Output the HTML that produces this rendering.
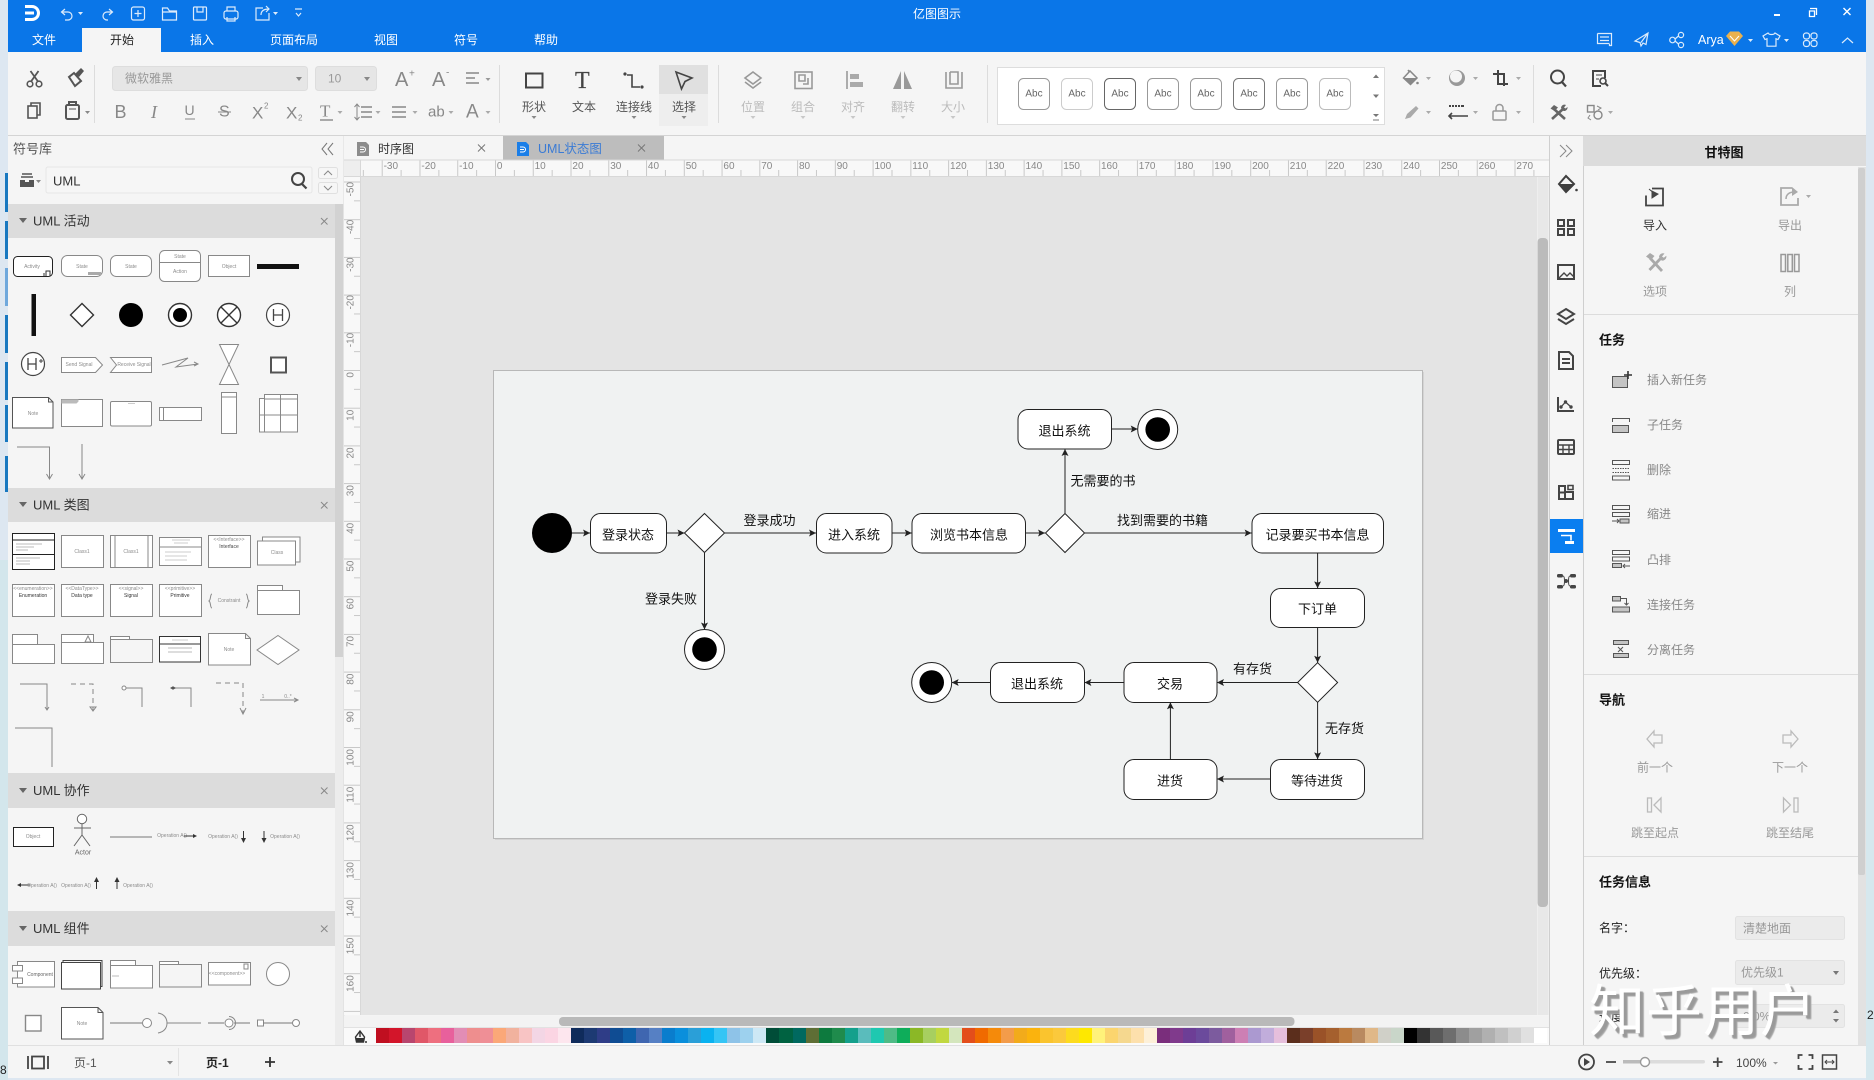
<!DOCTYPE html>
<html lang="zh"><head><meta charset="utf-8"><title>亿图图示</title>
<style>
html,body{margin:0;padding:0;width:1874px;height:1080px;overflow:hidden;background:#dfe8f0}
svg{position:absolute;left:0;top:0}
svg text{font-family:"Liberation Sans","Noto Sans CJK SC",sans-serif;dominant-baseline:central;font-size:12px}
.m{text-anchor:middle}
.tb{fill:#fff}
.ic{fill:none;stroke:#555;stroke-width:1.6}
.dis{fill:none;stroke:#aaa;stroke-width:1.6}
.wh{fill:none;stroke:#dcebfb;stroke-width:1.2}
.d{fill:#888}
.dr{fill:#999}
.rl text{font-size:10px;fill:#888}
.l{fill:#fff;stroke:#888;stroke-width:1}
.k{fill:#fff;stroke:#222;stroke-width:1}
.n{fill:none;stroke:#888;stroke-width:1}
.t text,text.t{font-size:5px;fill:#8c8c8c;text-anchor:middle}
.sh text{font-size:13px;fill:#333}
.sv text{font-size:13px;fill:#111;text-anchor:middle}
.bx{fill:#fff;stroke:#222;stroke-width:1}
.ln{stroke:#222;stroke-width:1;fill:none;marker-end:url(#ar)}
.ab{fill:#fff;stroke:#999;stroke-width:1}
.ab2 text{font-size:10px;fill:#666;text-anchor:middle}
.li text{font-size:12px;fill:#888}
.b{font-weight:bold;font-size:13px;fill:#111}
#pal{position:absolute;left:376px;top:1028px;height:15px;display:flex}
#pal i{display:block;width:13.03px;height:15px;flex:none}
#wm{position:absolute;left:1589px;top:973px;font:56px/70px "Noto Sans CJK SC","WenQuanYi Zen Hei",sans-serif;letter-spacing:1px;color:#fff;text-shadow:3px 3px 1px #9a9a9a,4px 4px 1px #a8a8a8;white-space:nowrap}
</style></head><body>
<svg width="1874" height="1080" viewBox="0 0 1874 1080" xmlns="http://www.w3.org/2000/svg">
<defs>
<marker id="ar" markerWidth="7" markerHeight="7" refX="7" refY="3.5" orient="auto" markerUnits="userSpaceOnUse"><path d="M0 0L7 3.500L0 7L1.500 3.500z" fill="#222"/></marker>
<pattern id="hr" x="495" y="160" width="37.76" height="17" patternUnits="userSpaceOnUse"><path d="M.5 0V17M19.400 10V17" stroke="#c8c8c8" fill="none"/></pattern>
<pattern id="vr" x="344" y="370" width="17" height="37.7" patternUnits="userSpaceOnUse"><path d="M0 .5H17M10 19.300H17" stroke="#c8c8c8" fill="none"/></pattern>
</defs>
<!-- desktop -->
<rect width="1874" height="1080" fill="#dde7f1"/>
<rect x="0" y="560" width="8" height="520" fill="#d3e6ec"/>
<rect x="1866" y="560" width="8" height="520" fill="#d6e8ee"/>
<g fill="#1878c0"><rect x="5" y="173" width="3" height="39"/><rect x="5" y="221" width="3" height="38"/><rect x="5" y="268" width="3" height="38" fill="#6fa8dc"/><rect x="5" y="315" width="3" height="38"/><rect x="5" y="362" width="3" height="38"/><rect x="5" y="405" width="3" height="37"/><rect x="5" y="456" width="3" height="36"/></g>
<text x="0" y="1070" fill="#222" style="font-size:12px">8</text>
<text x="1867" y="1015" fill="#222" style="font-size:12px">2</text>
<!-- window -->
<rect x="8" y="0" width="1858" height="1078" fill="#f5f5f5"/>
<rect x="8" y="0" width="1858" height="52" fill="#0a76e8"/>
<rect x="82" y="28" width="79" height="24" fill="#f5f5f5"/>
<rect x="8" y="135" width="1858" height="1" fill="#d4d4d4"/>
<!-- QAT -->
<g fill="none" stroke="#fff" stroke-width="3"><path d="M25 6.500h7a6.500 6.500 0 0 1 0 13h-7M25 13h9"/></g>
<g class="wh">
<path d="M65 9l-3.500 3 3.500 3M62 12h6a4 4 0 0 1 0 8h-3"/>
<path d="M109 9l3.500 3-3.500 3M112 12h-5a4 4 0 0 0 0 8h1"/>
<rect x="131.500" y="7" width="13" height="13" rx="2"/><path d="M138 10v7M134.500 13.500h7"/>
<path d="M162.500 10V20h14V11h-7l-2-3h-5zM162.500 12h14"/>
<rect x="193.500" y="7" width="13" height="13" rx="1"/><path d="M197 7v5h6V7"/>
<rect x="224" y="11" width="14" height="8" rx="2"/><path d="M227 11V7h8v4M227 17v4h8v-4"/>
<path d="M263 8h-7v12h13v-7M261 15c0-4 3-6 8-6M266 6l3 3-3 3"/>
<path d="M295 9h7M296 13l2.500 3 2.500-3"/>
</g>
<g fill="#dcebfb"><path d="M78 12h5l-2.500 3zM273 12h5l-2.500 3z"/></g>
<text x="937" y="14" class="m tb">亿图图示</text>
<!-- window buttons -->
<path d="M1774 15h6" stroke="#fff" stroke-width="2"/>
<path d="M1810 8.500h6.500v6.500M1809.500 11h5v5.500h-5z" fill="none" stroke="#fff" stroke-width="1.300"/>
<path d="M1843.500 8l7 7M1850.500 8l-7 7" stroke="#fff" stroke-width="1.400"/>
<g class="wh">
<path d="M1597.500 33.500h14v12h-2v-1.500M1597.500 33.500v10h12M1600 37h9M1600 40.500h9"/>
<path d="M1648 33l-13 8 5 1.500 1 3.500 2-3 3 1.500z M1648 33l-7 9.500"/>
<circle cx="1672.500" cy="40" r="2.800"/><circle cx="1681" cy="35" r="2.600"/><circle cx="1681" cy="45" r="2.600"/><path d="M1675 39l3.500-3M1675 41l3.500 3"/>
<path d="M1768 33l-5 3 2 3.500 2-.8v7.500h9v-7.500l2 .8 2-3.500-5-3c-1 2-6 2-7 0z"/>
<rect x="1803.500" y="33" width="6" height="6" rx="2.500"/><rect x="1811" y="33" width="6" height="6" rx="2.500"/><rect x="1803.500" y="40.500" width="6" height="6" rx="2.500"/><rect x="1811" y="40.500" width="6" height="6" rx="2.500"/>
<path d="M1842 43l5.500-5 5.500 5"/>
</g>
<text x="1698" y="40" fill="#fff" style="font-size:12.500px">Arya</text>
<path d="M1726 36l4-4.500h9l4 4.500-8.500 10z" fill="#eab14d"/><path d="M1730 36l4.500 5 4.500-5" fill="none" stroke="#fff" stroke-width="1"/>
<path d="M1748 39h5l-2.500 3zM1784 39h5l-2.500 3z" fill="#dcebfb"/>
<!-- menu -->
<g class="tb"><text x="44" y="40" class="m">文件</text><text x="202" y="40" class="m">插入</text><text x="294" y="40" class="m">页面布局</text><text x="386" y="40" class="m">视图</text><text x="466" y="40" class="m">符号</text><text x="546" y="40" class="m">帮助</text></g>
<text x="122" y="40" class="m" fill="#222">开始</text>
<!-- ribbon row 1 left -->
<g class="ic">
<circle cx="30" cy="84" r="2.800"/><circle cx="39" cy="84" r="2.800"/><path d="M31 81.500L38.500 71M38 81.500L30.500 71" stroke-width="1.800"/>
<path d="M69 77l6 9 6-5-7-8z" stroke-width="2"/>
<rect x="28" y="106" width="9" height="12"/><path d="M31 106v-3h9v12h-3"/>
<rect x="66" y="105" width="13" height="14" rx="1.500" stroke-width="2"/><path d="M69 105v-3h7v3" stroke-width="2"/><path d="M69 109h7" stroke-width="1"/>
</g>
<path d="M75 74l6-6 3 3-5 6z" fill="#555"/>
<path d="M85 111h5l-2.500 3z" class="d"/>
<path d="M94.500 65v58M499.500 65v58M718.500 65v58M987.500 65v58M1533.500 65v58" stroke="#dcdcdc"/>
<rect x="112.500" y="66.500" width="195" height="24" rx="3" fill="#e6e6e6" stroke="#ddd"/>
<text x="125" y="78.500" fill="#999">微软雅黑</text>
<path d="M296 77h6l-3 4z" class="d"/>
<rect x="315.500" y="66.500" width="61" height="24" rx="3" fill="#e6e6e6" stroke="#ddd"/>
<text x="328" y="78.500" fill="#999">10</text>
<path d="M364 77h6l-3 4z" class="d"/>
<text x="395" y="80" style="font-size:20px" fill="#888">A</text><text x="409" y="74" style="font-size:10px" fill="#888">+</text><text x="432" y="80" style="font-size:20px" fill="#888">A</text><text x="446" y="73" style="font-size:10px" fill="#888">-</text>
<path d="M466 73h13M466 78h9M466 83h13" stroke="#888" stroke-width="1.600"/>
<path d="M485.500 78h5l-2.500 3z" class="dr"/>
<!-- ribbon row 2 -->
<g fill="#888">
<text x="114.500" y="112" style="font-size:18px">B</text>
<text x="151" y="112" style="font-size:18px;font-family:'Liberation Serif',serif;font-style:italic">I</text>
<text x="184.500" y="110" style="font-size:14px">U</text><path d="M185 119h10" stroke="#888" stroke-width="1"/>
<text x="219" y="112" style="font-size:16px">S</text><path d="M218 112h13" stroke="#888" stroke-width="1"/>
<text x="252" y="113" style="font-size:17px">X</text><text x="264" y="106" style="font-size:8px">2</text>
<text x="286" y="113" style="font-size:17px">X</text><text x="298" y="118" style="font-size:8px">2</text>
<text x="320" y="111" style="font-size:17px;font-family:'Liberation Serif',serif">T</text><path d="M320 120h13" stroke="#888" stroke-width="1.400"/>
<path d="M337.500 111h5l-2.500 3zM375.500 111h5l-2.500 3zM412.500 111h5l-2.500 3zM448.500 111h5l-2.500 3zM485.500 111h5l-2.500 3z" fill="#aaa"/>
<text x="428" y="112" style="font-size:15px">ab</text>
<text x="466" y="112" style="font-size:19px">A</text>
</g>
<path d="M361 107h11M361 112h11M361 117h11M392 107h14M392 112h14M392 117h14" stroke="#888" stroke-width="1.600"/>
<path d="M357 105v14M354.500 107l2.500-3 2.500 3M354.500 117l2.500 3 2.500-3" stroke="#888" fill="none"/>
<!-- shapes -->
<rect x="526" y="73.500" width="16.500" height="14" fill="none" style="stroke:#444;stroke-width:2"/>
<text x="575" y="81" style="font-size:24px;font-family:'Liberation Serif',serif" fill="#444" stroke="#444" stroke-width=".2">T</text>
<path d="M627 75h5v12h8" fill="none" stroke="#444" stroke-width="1.600"/><circle cx="625" cy="74" r="1.600" fill="#444"/><circle cx="642" cy="87" r="1.600" fill="#444"/>
<rect x="659" y="65" width="49" height="29" fill="#e0e0e0"/><rect x="659" y="94" width="49" height="32" fill="#eeeeee"/>
<path d="M676 72l16 6-7 3.500-3.500 7.500z" class="ic" style="stroke:#444"/>
<g fill="#555"><text x="534" y="107" class="m">形状</text><text x="584" y="107" class="m">文本</text><text x="634" y="107" class="m">连接线</text><text x="684" y="107" class="m">选择</text></g>
<path d="M531.500 116h5l-2.500 3zM631.500 116h5l-2.500 3zM681.500 116h5l-2.500 3z" fill="#888"/>
<!-- disabled group -->
<g class="dis" style="stroke:#999">
<path d="M753 72l8 6-8 6-8-6zM745 82l8 6 8-6"/>
<rect x="795" y="72" width="17" height="16.500"/><path d="M799 75h6v6h-6zM803 84h5v-6"/>
<path d="M847 71v18"/><path d="M946 72v16h16V72M950 72v12h8V72h-8"/>
</g>
<path d="M850 74h9v5h-9zM850 82h13v5h-13z" fill="#aaa"/>
<path d="M893 89l8-18v18zM904 71l8 18h-8z" fill="#999"/>
<g fill="#bbb"><text x="753" y="107" class="m">位置</text><text x="803" y="107" class="m">组合</text><text x="853" y="107" class="m">对齐</text><text x="903" y="107" class="m">翻转</text><text x="953" y="107" class="m">大小</text></g>
<path d="M750.500 116h5l-2.500 3zM800.500 116h5l-2.500 3zM850.500 116h5l-2.500 3zM900.500 116h5l-2.500 3zM950.500 116h5l-2.500 3z" fill="#c8c8c8"/>
<!-- style panel -->
<rect x="997.500" y="67.500" width="387" height="57" fill="#fff" stroke="#ddd"/>
<g class="ab"><rect x="1018.500" y="78.500" width="31" height="31" rx="5"/><rect x="1061.500" y="78.500" width="31" height="31" rx="5" stroke="#ccc"/><rect x="1104.500" y="78.500" width="31" height="31" rx="5" stroke="#666"/><rect x="1147.500" y="78.500" width="31" height="31" rx="5"/><rect x="1190.500" y="78.500" width="31" height="31" rx="5"/><rect x="1233.500" y="78.500" width="31" height="31" rx="5" stroke="#777"/><rect x="1276.500" y="78.500" width="31" height="31" rx="5"/><rect x="1319.500" y="78.500" width="31" height="31" rx="5" stroke="#bbb"/></g>
<g class="ab2"><text x="1034" y="94">Abc</text><text x="1077" y="94">Abc</text><text x="1120" y="94">Abc</text><text x="1163" y="94">Abc</text><text x="1206" y="94">Abc</text><text x="1249" y="94">Abc</text><text x="1292" y="94">Abc</text><text x="1335" y="94">Abc</text></g>
<path d="M1373 78h6l-3-3.500zM1373 94.500h6l-3 3.500zM1373 114h6l-3 3z" fill="#777" stroke="none"/><path d="M1373 120h6" stroke="#777"/>
<!-- right tools -->
<path d="M1408 70l1.500 2M1403.500 78l6.500-7 7 7-6.500 6.500z" fill="none" stroke="#888" stroke-width="1.500"/><path d="M1403.500 78h13.500l-6.500 6.500z" fill="#888"/><circle cx="1417.500" cy="83" r="1.300" fill="#888"/>
<circle cx="1457" cy="78" r="8" fill="#999"/><circle cx="1456" cy="76.500" r="6" fill="#f5f5f5"/>
<path d="M1498 70v14h10M1493 74h11v12" fill="none" stroke="#444" stroke-width="2"/>
<path d="M1405 119l2-5 9-8 2.500 2.500-8 9z" fill="#aaa"/>
<path d="M1449 106h2M1452 106h2M1455 106h2M1458 106h2M1461 106h3" stroke="#444" stroke-width="2"/>
<path d="M1449 116h19M1452 113l-3 3 3 3" stroke="#444" stroke-width="1.600" fill="none"/>
<rect x="1493" y="111" width="13" height="9" rx="1" fill="none" stroke="#999" stroke-width="1.500"/><path d="M1496 111v-3a3.500 3.500 0 0 1 7 0v3" fill="none" stroke="#999" stroke-width="1.500"/>
<path d="M1426 77h5l-2.500 3zM1473 77h5l-2.500 3zM1516 77h5l-2.500 3zM1426 111h5l-2.500 3zM1473 111h5l-2.500 3zM1516 111h5l-2.500 3zM1608 111h5l-2.500 3z" fill="#aaa"/>
<circle cx="1557.500" cy="77" r="6.500" fill="none" stroke="#444" stroke-width="2"/><path d="M1562 82l4 4.500" stroke="#444" stroke-width="2.200"/>
<path d="M1605 78V71h-12v15h8" fill="none" stroke="#444" stroke-width="2"/><path d="M1596 75h6M1596 79h3" stroke="#444"/><circle cx="1603" cy="81" r="3" fill="none" stroke="#444" stroke-width="1.600"/><path d="M1605 83l3 3" stroke="#444" stroke-width="2"/>
<!-- tools: wrench + hammer -->
<path d="M1554 109l11 10M1563 109l-11 10" stroke="#666" stroke-width="2.600"/><path d="M1550.500 108.500l3.500-3.500 4 2.500-3.500 3.500z" fill="#666"/><path d="M1561 108a3.500 3.500 0 0 1 5-3l-2 2.500 1.500 1 2-1.500a3.500 3.500 0 0 1-4 4z" fill="#666"/>
<rect x="1587.500" y="105.500" width="6.500" height="6.500" fill="none" stroke="#888" stroke-width="1.400"/><circle cx="1598" cy="115" r="4" fill="none" stroke="#888" stroke-width="1.400"/><path d="M1597 106l4 2-3 2M1590 115l-2 3 3 2" fill="none" stroke="#888"/>
<!-- LEFT PANEL -->
<text x="13" y="149" fill="#555" style="font-size:13px">符号库</text>
<path d="M327 143l-5 6 5 6M333 143l-5 6 5 6" fill="none" stroke="#777"/>
<path d="M22 174h10M21 177h12" stroke="#555" stroke-width="1.500"/><path d="M20 180h5v2h4v-2h5v7H20z" fill="#555"/>
<path d="M36 180h5l-2.500 3z" fill="#888"/>
<rect x="46" y="167" width="266" height="26" rx="2" fill="#f6f6f6" stroke="#e6e6e6"/>
<text x="53" y="181" fill="#333" style="font-size:13px">UML</text>
<circle cx="298" cy="179" r="6" fill="none" stroke="#444" stroke-width="2"/><path d="M302 184l4.500 4.500" stroke="#444" stroke-width="2.200"/>
<rect x="318.500" y="167.500" width="19" height="11" rx="2" fill="#f6f6f6" stroke="#e0e0e0"/><rect x="318.500" y="182.500" width="19" height="11" rx="2" fill="#f6f6f6" stroke="#e0e0e0"/>
<path d="M324 175l4-4 4 4M324 186l4 4 4-4" fill="none" stroke="#888"/>
<rect x="335" y="204" width="9" height="841" fill="#ececec"/><rect x="335" y="204" width="8" height="453" fill="#d2d2d2"/>
<rect x="343.500" y="136" width="1" height="909" fill="#dadada"/>
<g class="sh">
<rect x="8" y="204" width="327" height="34" fill="#dcdcdc"/><rect x="8" y="488" width="327" height="34" fill="#dcdcdc"/><rect x="8" y="773" width="327" height="35" fill="#dcdcdc"/><rect x="8" y="911" width="327" height="35" fill="#dcdcdc"/>
<text x="33" y="221">UML 活动</text><text x="33" y="505">UML 类图</text><text x="33" y="790.500">UML 协作</text><text x="33" y="928.500">UML 组件</text>
</g>
<path d="M19 218h8l-4 5zM19 502h8l-4 5zM19 788h8l-4 5zM19 926h8l-4 5z" fill="#666"/>
<path d="M321 218l6.500 6.500M327.500 218l-6.500 6.500M321 502l6.500 6.500M327.500 502l-6.500 6.500M321 787.500l6.500 6.500M327.500 787.500l-6.500 6.500M321 925.500l6.500 6.500M327.500 925.500l-6.500 6.500" stroke="#888"/>
<!-- UML activity -->
<g class="t">
<rect x="13.500" y="256.500" width="39" height="20" rx="4" class="k"/><text x="32" y="267">Activity</text><path d="M46 276v-5h4v5M44 273v3" class="n" style="stroke:#333"/>
<rect x="61.500" y="255.500" width="41" height="21" rx="6" class="l"/><text x="82" y="267">State</text><rect x="88" y="272" width="13" height="3" fill="#aaa"/>
<rect x="110.500" y="255.500" width="41" height="21" rx="6" class="l"/><text x="131" y="267">State</text>
<rect x="159.500" y="250.500" width="41" height="31" rx="5" class="l"/><path d="M159.500 262.500h41" class="n"/><text x="180" y="257">State</text><text x="180" y="272">Action</text>
<rect x="208.500" y="255.500" width="41" height="21" class="l"/><text x="229" y="267">Object</text>
<rect x="257" y="264" width="42" height="5" fill="#111"/>
<rect x="31.500" y="294" width="4.500" height="42" fill="#111"/>
<path d="M82 303.500l11.500 11.500-11.500 11.500-11.500-11.500z" class="k" style="stroke:#333;stroke-width:1.400"/>
<circle cx="131" cy="315" r="12" fill="#000"/>
<circle cx="180" cy="315" r="11.500" fill="#fff" stroke="#333" stroke-width="1.400"/><circle cx="180" cy="315" r="7" fill="#000"/>
<circle cx="229" cy="315" r="11.500" fill="#fff" stroke="#333" stroke-width="1.400"/><path d="M221 307l16 16M237 307l-16 16" stroke="#333" stroke-width="1.400"/>
<circle cx="278" cy="315" r="11.500" fill="#fff" stroke="#444" stroke-width="1.200"/><path d="M273.500 309v12M282.500 309v12M273.500 315h9" stroke="#444" stroke-width="1.300"/>
<circle cx="33" cy="364" r="11.500" fill="#fff" stroke="#444" stroke-width="1.200"/><path d="M28 358v12M36 358v12M28 364h8" stroke="#444" stroke-width="1.300"/><path d="M39 361h4M41 359v4" stroke="#444"/>
<path d="M61.500 357.500h34l7 7.500-7 7.500h-34z" class="l"/><text x="79" y="365">Send Signal</text>
<path d="M110.500 357.500h41v15h-41l6-7.500z" class="l"/><text x="134" y="365">Receive Signal</text>
<path d="M162 365l26-7-12 9 22-3m-4-2l4 2-4 2" class="n"/>
<path d="M219.500 344.500h19l-19 40h19z" class="l"/>
<rect x="271" y="357.500" width="15" height="15" fill="#fff" stroke="#555" stroke-width="2"/>
<path d="M12.500 397.500h36l4.500 4.500v26H12.500zM48.500 397.500v4.500h4.500" class="l" style="stroke:#555"/><text x="33" y="414">Note</text>
<rect x="61.500" y="399.500" width="41" height="27" class="l"/><path d="M61.500 399.500h17v2l-2 2h-15z" fill="#bbb"/>
<rect x="110.500" y="401.500" width="41" height="24.500" rx="1.500" class="l"/><path d="M128 403.500h7" stroke="#ccc"/>
<rect x="159.500" y="407.500" width="42" height="13" class="l"/><path d="M163.500 407.500v13" class="n"/>
<rect x="221.500" y="392.500" width="15" height="41" class="l"/><path d="M221.500 397h15" class="n"/>
<rect x="264.500" y="394.500" width="33" height="37.500" class="l"/><rect x="259.500" y="398.500" width="5" height="33.500" class="l"/><path d="M264.500 399h33M280.500 394.500v37.500M259.500 415h38" class="n"/>
<path d="M17 447h32.500v32M46.500 474l3 5 3-5" class="n"/>
<path d="M82 444v35M79 474l3 5 3-5" class="n"/>
</g>
<!-- UML class -->
<g class="t">
<rect x="12.500" y="533.500" width="42" height="36" class="k"/><path d="M12.500 540h42M12.500 554.500h42" stroke="#222"/><path d="M16 544h26M16 547h18M16 550h12M16 558h24M16 561h14M16 564h14" stroke="#bbb"/>
<rect x="61.500" y="535.500" width="42" height="32" class="l"/><text x="82" y="552">Class1</text>
<rect x="110.500" y="535.500" width="42" height="32" class="l"/><path d="M115 535.500v32M148 535.500v32" class="n"/><text x="131" y="552">Class1</text>
<rect x="159.500" y="537.500" width="42" height="28" class="l"/><path d="M159.500 547h42" class="n"/><path d="M172 540h18M174 543h14M165 552h26M165 556h22M165 560h22" stroke="#ccc"/>
<rect x="208.500" y="535.500" width="42" height="32" class="l"/><text x="229" y="540">&lt;&lt;Interface&gt;&gt;</text><text x="229" y="547" style="fill:#444">Interface</text>
<rect x="262.500" y="537" width="37.500" height="25" class="l"/><rect x="257.500" y="541" width="38" height="24" class="l"/><text x="277" y="553">Class</text>
<rect x="12.500" y="584.500" width="42" height="32" class="l"/><text x="33" y="589">&lt;&lt;enumeration&gt;&gt;</text><text x="33" y="596" style="fill:#333">Enumeration</text>
<rect x="61.500" y="584.500" width="42" height="32" class="l"/><text x="82" y="589">&lt;&lt;DataType&gt;&gt;</text><text x="82" y="596" style="fill:#333">Data type</text>
<rect x="110.500" y="584.500" width="42" height="32" class="l"/><text x="131" y="589">&lt;&lt;signal&gt;&gt;</text><text x="131" y="596" style="fill:#333">Signal</text>
<rect x="159.500" y="584.500" width="42" height="32" class="l"/><text x="180" y="589">&lt;&lt;primitive&gt;&gt;</text><text x="180" y="596" style="fill:#333">Primitive</text>
<text x="229" y="601">Constraint</text><path d="M212 594c-2 0-1 6-3 7 2 1 1 7 3 7M246 594c2 0 1 6 3 7-2 1-1 7-3 7" class="n"/>
<rect x="257.500" y="590.500" width="42" height="24" class="l"/><rect x="257.500" y="585.500" width="25" height="5" class="l"/>
<rect x="12.500" y="644.500" width="42" height="19" class="l"/><rect x="12.500" y="634.500" width="25" height="10" class="l"/>
<rect x="61.500" y="642.500" width="42" height="21" class="l"/><rect x="61.500" y="634.500" width="32" height="8" class="l"/><path d="M85 642l3-6 3 6z" class="n"/>
<rect x="110.500" y="639.500" width="42" height="23" fill="none" stroke="#888"/><rect x="110.500" y="636.500" width="19" height="3" class="l"/>
<rect x="159.500" y="636.500" width="41" height="25.500" class="k" style="stroke:#333"/><path d="M159.500 644h41" stroke="#333"/><path d="M168 648h24M168 652h24" stroke="#bbb"/><path d="M172 640h16" stroke="#ccc"/>
<path d="M208.500 633.500h37l5 5v26.500h-42zM245.500 633.500v5h5" class="l"/><text x="229" y="650">Note</text>
<path d="M278 635.500l21 14.500-21 14.500-21-14.500z" class="l"/>
<path d="M20 684h27v26M45 707l2 3 2-3" class="n"/>
<path d="M71 684h22v26" class="n" stroke-dasharray="5 4"/><path d="M90 707l3 4 3-4z" class="n"/>
<path d="M126 688h16v19" class="n"/><circle cx="124" cy="688" r="2" class="l"/>
<path d="M175 688h16v19" class="n"/><path d="M170 688l3-1.800 3 1.800-3 1.800z" fill="#555"/>
<path d="M216 683h27v30" class="n" stroke-dasharray="5 4"/><path d="M240 708l3 6 3-6" class="n"/>
<path d="M260 700h38M294 698l4 2-4 2" class="n"/><text x="263" y="697">1</text><text x="288" y="697">0..*</text>
<path d="M15 728h37v39" class="n"/>
</g>
<!-- UML collab -->
<g class="t">
<rect x="13.500" y="827.500" width="40" height="19" class="k"/><text x="33" y="837">Object</text>
<circle cx="82" cy="819" r="4.700" class="l" style="stroke:#666"/><path d="M82 824v11M74 828h17M82 835l-8 11M82 835l8 11" class="n" style="stroke:#666"/>
<text x="83" y="853" style="font-size:7px;fill:#666">Actor</text>
<path d="M110 837h42" stroke="#777"/>
<text x="172" y="836">Operation A()</text><path d="M184 836h12" stroke="#333"/><path d="M193 834l4 2-4 2z" fill="#333"/>
<text x="223" y="837">Operation A()</text><path d="M243.500 831v11" stroke="#333"/><path d="M241 838l2.500 5 2.500-5z" fill="#333"/>
<path d="M264 831v11" stroke="#333"/><path d="M261.500 838l2.500 5 2.500-5z" fill="#333"/><text x="285" y="837">Operation A()</text>
<path d="M18 885h12" stroke="#333"/><path d="M21 883l-4 2 4 2z" fill="#333"/><text x="42" y="886">Operation A()</text>
<text x="76" y="886">Operation A()</text><path d="M96.500 878v11" stroke="#333"/><path d="M94 882l2.500-5 2.500 5z" fill="#333"/>
<path d="M117 878v11" stroke="#333"/><path d="M114.500 882l2.500-5 2.500 5z" fill="#333"/><text x="138" y="886">Operation A()</text>
</g>
<!-- UML component -->
<g class="t">
<rect x="17.500" y="961.500" width="37" height="25.500" class="l"/><rect x="12.500" y="965.500" width="10" height="5.500" class="l"/><rect x="12.500" y="978" width="10" height="5.500" class="l"/><text x="40" y="975" style="fill:#666">Component</text>
<rect x="61.500" y="962.500" width="39" height="26.500" class="k" style="stroke:#444"/><path d="M63 962.500v-2h39v26h-2" class="n" style="stroke:#444"/>
<rect x="110.500" y="965.500" width="42" height="22.500" class="l"/><rect x="110.500" y="960.500" width="25" height="5" class="l"/><path d="M112 976h7" stroke="#bbb"/>
<rect x="159.500" y="964.500" width="42" height="22.500" fill="none" stroke="#888"/><rect x="159.500" y="961.500" width="19" height="3" class="l"/>
<rect x="208.500" y="962.500" width="42" height="22.500" class="l"/><text x="227" y="974">&lt;&lt;component&gt;&gt;</text><rect x="244" y="964" width="4" height="5" class="n"/>
<circle cx="278" cy="974" r="11.500" class="l"/>
<rect x="25.500" y="1015.500" width="15.500" height="15.500" class="l" style="stroke-width:1.400"/>
<path d="M61.500 1007.500h36.500l5 5v26.500H61.500zM98 1007.500v5h5" class="l" style="stroke:#555"/><text x="82" y="1024">Note</text>
<path d="M110 1023h32" stroke="#777"/><circle cx="147" cy="1023" r="4.500" class="l"/>
<path d="M158 1013c6 1 9 5 9 10s-3 9-9 10M167 1023h34" class="n"/>
<path d="M208 1023h16M234 1023h16" stroke="#777"/><circle cx="229" cy="1023" r="4" class="l"/><path d="M229 1016.500a6.500 6.500 0 0 1 0 13" class="n"/>
<rect x="257.500" y="1020" width="6" height="6" class="l"/><path d="M263.500 1023h29" stroke="#777"/><circle cx="296" cy="1023" r="3.500" class="l"/>
</g>
<!-- tabs -->
<rect x="344" y="136" width="159" height="24" fill="#f5f5f5"/>
<rect x="503" y="136" width="161" height="24" fill="#bdbdbd"/>
<path d="M357 142h9l3 3v11h-12z" fill="#8c8c8c"/><path d="M360 147h3a2 2 0 0 1 0 5h-3M360 149.500h4" stroke="#fff" fill="none"/>
<path d="M517 142h9l3 3v11h-12z" fill="#1a7ee8"/><path d="M520 147h3a2 2 0 0 1 0 5h-3M520 149.500h4" stroke="#fff" fill="none"/>
<text x="378" y="149" fill="#333">时序图</text>
<text x="538" y="149" fill="#3a7bd5" style="font-size:12.500px">UML状态图</text>
<path d="M478 144.500l7 7M485 144.500l-7 7M638 144.500l7 7M645 144.500l-7 7" stroke="#777"/>
<!-- canvas -->
<rect x="361" y="177" width="1176" height="838" fill="#e4e4e4"/>
<!-- rulers -->
<rect x="344" y="160" width="1205" height="17" fill="#f8f8f8"/>
<rect x="344" y="177" width="17" height="838" fill="#f8f8f8"/>
<rect x="344" y="160" width="17" height="17" fill="#eeeeee"/>
<rect x="361" y="160" width="1176" height="17" fill="url(#hr)"/>
<rect x="344" y="177" width="17" height="838" fill="url(#vr)"/>
<path d="M344 176.500H1549M360.500 160V1015M344 160h1205" stroke="#d8d8d8"/>
<g class="rl">
<text x="383.600" y="166.500">-30</text><text x="421.400" y="166.500">-20</text><text x="459.100" y="166.500">-10</text><text x="496.900" y="166.500">0</text><text x="534.600" y="166.500">10</text><text x="572.400" y="166.500">20</text><text x="610.200" y="166.500">30</text><text x="647.900" y="166.500">40</text><text x="685.700" y="166.500">50</text><text x="723.400" y="166.500">60</text><text x="761.200" y="166.500">70</text><text x="799" y="166.500">80</text><text x="836.700" y="166.500">90</text><text x="874.500" y="166.500">100</text><text x="912.200" y="166.500">110</text><text x="950" y="166.500">120</text><text x="987.800" y="166.500">130</text><text x="1025.500" y="166.500">140</text><text x="1063.300" y="166.500">150</text><text x="1101" y="166.500">160</text><text x="1138.800" y="166.500">170</text><text x="1176.600" y="166.500">180</text><text x="1214.300" y="166.500">190</text><text x="1252.100" y="166.500">200</text><text x="1289.800" y="166.500">210</text><text x="1327.600" y="166.500">220</text><text x="1365.400" y="166.500">230</text><text x="1403.100" y="166.500">240</text><text x="1440.900" y="166.500">250</text><text x="1478.600" y="166.500">260</text><text x="1516.400" y="166.500">270</text>
<text text-anchor="end" transform="translate(351,182) rotate(-90)">-50</text><text text-anchor="end" transform="translate(351,219.700) rotate(-90)">-40</text><text text-anchor="end" transform="translate(351,257.400) rotate(-90)">-30</text><text text-anchor="end" transform="translate(351,295.100) rotate(-90)">-20</text><text text-anchor="end" transform="translate(351,332.800) rotate(-90)">-10</text><text text-anchor="end" transform="translate(351,372) rotate(-90)">0</text><text text-anchor="end" transform="translate(351,409.700) rotate(-90)">10</text><text text-anchor="end" transform="translate(351,447.400) rotate(-90)">20</text><text text-anchor="end" transform="translate(351,485.100) rotate(-90)">30</text><text text-anchor="end" transform="translate(351,522.800) rotate(-90)">40</text><text text-anchor="end" transform="translate(351,560.500) rotate(-90)">50</text><text text-anchor="end" transform="translate(351,598.200) rotate(-90)">60</text><text text-anchor="end" transform="translate(351,635.900) rotate(-90)">70</text><text text-anchor="end" transform="translate(351,673.600) rotate(-90)">80</text><text text-anchor="end" transform="translate(351,711.300) rotate(-90)">90</text><text text-anchor="end" transform="translate(351,749) rotate(-90)">100</text><text text-anchor="end" transform="translate(351,786.700) rotate(-90)">110</text><text text-anchor="end" transform="translate(351,824.400) rotate(-90)">120</text><text text-anchor="end" transform="translate(351,862.100) rotate(-90)">130</text><text text-anchor="end" transform="translate(351,899.800) rotate(-90)">140</text><text text-anchor="end" transform="translate(351,937.500) rotate(-90)">150</text><text text-anchor="end" transform="translate(351,975.200) rotate(-90)">160</text>
</g>
<!-- page -->
<rect x="495" y="372" width="929" height="468" fill="#d4d4d4"/>
<rect x="493.500" y="370.500" width="929" height="468" fill="#f0f2f2" stroke="#b8b8b8"/>
<!-- diagram -->
<circle cx="552" cy="533" r="20" fill="#000"/>
<path class="ln" d="M572 533H590"/><path class="ln" d="M666 533H684.500"/><path class="ln" d="M724.500 533H816"/><path class="ln" d="M892 533H911.700"/><path class="ln" d="M1025.600 533H1045"/><path class="ln" d="M1084.400 533H1251.600"/>
<path class="ln" d="M704.500 553V629.500"/><path class="ln" d="M1065 513V449"/><path class="ln" d="M1111.600 429H1137.700"/><path class="ln" d="M1317.600 553V588.300"/><path class="ln" d="M1317.600 627.300V662.700"/><path class="ln" d="M1297.700 682.500H1217"/><path class="ln" d="M1123.800 682.500H1084.400"/><path class="ln" d="M990.500 682.500H951.700"/><path class="ln" d="M1317.600 702.300V759.300"/><path class="ln" d="M1270.400 779H1217"/><path class="ln" d="M1170.400 759.300V702.300"/>
<g class="bx">
<rect x="590.500" y="513.500" width="76" height="39.500" rx="10"/>
<path d="M704.500 513.500l20 19.500-20 19.500-20-19.500z"/>
<rect x="816.500" y="513.500" width="75.500" height="39.500" rx="10"/>
<rect x="912" y="513.500" width="113.500" height="39.500" rx="10"/>
<path d="M1065 513.500l19.500 19.500-19.500 19.500-19.500-19.500z"/>
<rect x="1252" y="513.500" width="131.500" height="39.500" rx="10"/>
<rect x="1018" y="409.500" width="93.500" height="39.500" rx="10"/>
<circle cx="1157.700" cy="429.500" r="20"/>
<circle cx="704.500" cy="649.500" r="20"/>
<rect x="1270.500" y="588.500" width="94" height="39" rx="10"/>
<path d="M1317.600 662.700l20 19.800-20 19.800-20-19.800z"/>
<rect x="1124" y="662.500" width="93" height="40" rx="10"/>
<rect x="990.500" y="662.500" width="94" height="40" rx="10"/>
<circle cx="931.700" cy="682.500" r="20"/>
<rect x="1124" y="759.500" width="93" height="40" rx="10"/>
<rect x="1270.500" y="759.500" width="94" height="40" rx="10"/>
</g>
<circle cx="1157.700" cy="429.500" r="12.300" fill="#000"/><circle cx="704.500" cy="649.500" r="12.300" fill="#000"/><circle cx="931.700" cy="682.500" r="12.300" fill="#000"/>
<g class="sv">
<text x="628" y="535">登录状态</text><text x="854" y="535">进入系统</text><text x="969" y="535">浏览书本信息</text><text x="1317.500" y="535">记录要买书本信息</text><text x="1064.500" y="431">退出系统</text><text x="1317.500" y="609">下订单</text><text x="1170" y="684">交易</text><text x="1037" y="684">退出系统</text><text x="1170" y="781">进货</text><text x="1317" y="781">等待进货</text>
<text x="769.500" y="520.500">登录成功</text><text x="1162.500" y="520.500">找到需要的书籍</text><text x="1103" y="481">无需要的书</text><text x="671" y="599">登录失败</text><text x="1252.500" y="669">有存货</text><text x="1344.500" y="728.500">无存货</text>
</g>
<!-- scrollbars -->
<rect x="1537.500" y="177" width="11" height="838" fill="#e8e8e8"/>
<rect x="1537.500" y="238" width="10.500" height="669" rx="4" fill="#bbbbbb"/>
<rect x="344" y="1015.500" width="1205" height="12" fill="#f3f3f3"/>
<rect x="559" y="1017" width="735.500" height="9" rx="4" fill="#b9b9b9"/>
<rect x="344" y="1027" width="1205" height="18" fill="#fafafa"/>
<path d="M344 1027.500H1549" stroke="#e2e2e2"/>
<path d="M360 1031l4.500 6-1 5h-7l-1-5zM360 1031v6" fill="#f5f5f5" stroke="#333" stroke-width="1.400"/><path d="M355.500 1038h9l-1 4.500h-7z" fill="#333"/><circle cx="366" cy="1042" r="1" fill="#333"/>
<!-- right strip -->
<rect x="1549" y="136" width="34" height="909" fill="#f5f5f5"/>
<path d="M1549.500 136V1045M1583.500 136V1045" stroke="#cfcfcf"/>
<path d="M1560 145l6 6-6 6M1566 145l6 6-6 6" fill="none" stroke="#888"/>
<rect x="1550" y="519" width="33" height="34" fill="#0a7ef0"/>
<path d="M1559 184l7-8 8 8-8 8z" fill="none" stroke="#3f3f3f" stroke-width="2"/><path d="M1559 184h15l-8 8z" fill="#3f3f3f"/><circle cx="1576.500" cy="190" r="1.300" fill="#3f3f3f"/>
<g fill="none" style="stroke:#444;stroke-width:2">
<rect x="1558" y="220" width="6" height="6"/><rect x="1568" y="220" width="6" height="6"/><rect x="1558" y="229" width="6" height="6"/><rect x="1568" y="229" width="6" height="6"/>
<rect x="1558" y="265" width="16" height="14"/><path d="M1559 278l5-5 3 3 3-3 4 4" stroke-width="1.400"/>
<path d="M1566 309l8 5-8 5-8-5zM1558 319l8 5 8-5"/>
<path d="M1559 352h10l4 4v13h-14zM1562 359h8M1562 363h8"/>
<path d="M1558 397v14h16" />
<path d="M1561 407l4.500-5 5.500 5" stroke-width="1.300"/>
<rect x="1558" y="440" width="16" height="14" rx="1"/><path d="M1558 445h16M1563 445v9M1569 445v9M1558 449.500h16" stroke-width="1.400"/>
<path d="M1559 486h6v6h8v7h-14zM1559 492.500h6M1565 492v7" stroke-width="2"/><path d="M1568 485.500h5v4h-5z" stroke-width="1.600"/>
</g>
<circle cx="1561" cy="407" r="1.700" fill="#444"/><circle cx="1565.500" cy="402" r="1.700" fill="#444"/><circle cx="1571" cy="407" r="1.700" fill="#444"/>
<path d="M1558 529h17v3h-17zM1565 541h9v3h-9z" fill="#fff"/><path d="M1561 535.500h10v5" fill="none" stroke="#fff" stroke-width="1.600"/>
<rect x="1557" y="574" width="6" height="3.500" rx="1.500" fill="#444"/><rect x="1570" y="574" width="6" height="3.500" rx="1.500" fill="#444"/><rect x="1557" y="585" width="6" height="3.500" rx="1.500" fill="#444"/><rect x="1570" y="585" width="6" height="3.500" rx="1.500" fill="#444"/><circle cx="1566" cy="581" r="2" fill="#444"/><path d="M1563 576c2 0 2 10 0 10M1570 576c-2 0-2 10 0 10" fill="none" stroke="#444"/>
<!-- right panel -->
<rect x="1583" y="136" width="283" height="30" fill="#dcdcdc"/>
<text x="1724" y="152.500" class="m b">甘特图</text>
<rect x="1858" y="167" width="8" height="878" fill="#e2e2e2"/><rect x="1858" y="168" width="7" height="707" rx="2" fill="#cfcfcf"/>
<path d="M1584 314.500h274M1584 674.500h274M1584 856.500h274" stroke="#dcdcdc"/>
<!-- gantt top icons -->
<path d="M1652 188.500h11v17h-17v-10" fill="none" stroke="#444" stroke-width="1.800"/><path d="M1649 189l7 6M1652 198l6-4-6-3z" fill="#444" stroke="#444"/>
<path d="M1792 188h-11v17h17v-7" fill="none" stroke="#aaa" stroke-width="1.800"/><path d="M1786 199c0-5 4-7 8-7" fill="none" stroke="#aaa" stroke-width="1.600"/><path d="M1792 187l6 5-6 4z" fill="#aaa"/>
<path d="M1806 195h5l-2.500 3z" fill="#aaa"/>
<path d="M1650 258l12 13M1662 257l-12.500 13" stroke="#aaa" stroke-width="2.800"/><path d="M1646 256.500l4-3.500 4.500 3-3.500 4z" fill="#aaa"/><path d="M1659 257a4 4 0 0 1 5.500-3.500l-2.500 3 1.800 1.200 2.500-2a4 4 0 0 1-4.800 4.800z" fill="#aaa"/>
<rect x="1781" y="254.500" width="4.500" height="17" fill="none" stroke="#999" stroke-width="1.500"/><rect x="1787.800" y="254.500" width="4.500" height="17" fill="none" stroke="#999" stroke-width="1.500"/><rect x="1794.500" y="254.500" width="4.500" height="17" fill="none" stroke="#999" stroke-width="1.500"/>
<text x="1655" y="225.500" class="m" fill="#333">导入</text><text x="1790" y="225.500" class="m" fill="#999">导出</text><text x="1655" y="291.500" class="m" fill="#999">选项</text><text x="1790" y="291.500" class="m" fill="#999">列</text>
<text x="1599" y="340" class="b">任务</text><text x="1599" y="700" class="b">导航</text><text x="1599" y="882" class="b">任务信息</text>
<g class="li"><text x="1647" y="380">插入新任务</text><text x="1647" y="425">子任务</text><text x="1647" y="470">删除</text><text x="1647" y="514">缩进</text><text x="1647" y="560">凸排</text><text x="1647" y="605">连接任务</text><text x="1647" y="650">分离任务</text></g>
<!-- task icons -->
<g stroke="#555" fill="#c4c4c4">
<rect x="1612.500" y="376.500" width="15" height="11"/>
<rect x="1612.500" y="425.500" width="16" height="7"/>
<rect x="1612.500" y="505.500" width="17" height="4" fill="none"/><rect x="1612.500" y="512.500" width="17" height="4" fill="none"/><rect x="1620" y="519" width="9" height="4"/>
<rect x="1612.500" y="550.500" width="17" height="4" fill="none"/><rect x="1612.500" y="557" width="17" height="4" fill="none"/><rect x="1612.500" y="563.500" width="9" height="4"/>
<rect x="1612.500" y="596.500" width="8" height="4.500"/><rect x="1612.500" y="607" width="17" height="5"/>
<rect x="1613.500" y="640.500" width="15" height="4"/><rect x="1613.500" y="653.500" width="15" height="4"/>
</g>
<path d="M1628 371v8M1624 375h8" stroke="#333" stroke-width="1.600"/>
<g fill="none" stroke="#555">
<path d="M1612.500 422v-3.500h17v3.500"/>
<rect x="1612.500" y="460.500" width="17" height="4"/><rect x="1612.500" y="476" width="17" height="4"/><path d="M1612.500 468.500h17M1612.500 472.500h17" stroke-dasharray="1.500 1"/>
<path d="M1612 521h7M1617 519l2 2-2 2"/><path d="M1623 566h7M1625 564l-2 2 2 2"/>
<path d="M1620.500 598.500h6v6M1624.500 603l2 2 2-2"/>
<path d="M1618 647l5 5M1623 647l-5 5"/>
</g>
<!-- nav -->
<g fill="none" stroke="#bbb" stroke-width="1.300">
<path d="M1647 739l7-8v4h8v8h-8v4z"/><path d="M1798 739l-7-8v4h-8v8h8v4z"/>
<rect x="1647.500" y="798" width="4" height="14"/><path d="M1661 798v14l-7-7z"/>
<path d="M1783.500 798v14l7-7z"/><rect x="1794" y="798" width="4" height="14"/>
</g>
<g fill="#999"><text x="1655" y="767.500" class="m">前一个</text><text x="1790" y="767.500" class="m">下一个</text><text x="1655" y="833" class="m">跳至起点</text><text x="1790" y="833" class="m">跳至结尾</text></g>
<g fill="#222"><text x="1599" y="928">名字：</text><text x="1599" y="973.500">优先级：</text><text x="1599" y="1017">进度：</text></g>
<g fill="#ebebeb" stroke="#e2e2e2"><rect x="1735.500" y="916.500" width="109" height="23" rx="2"/><rect x="1735.500" y="960.500" width="109" height="24" rx="2"/><rect x="1735.500" y="1004.500" width="109" height="23" rx="2"/></g>
<g fill="#999"><text x="1743" y="928.500">清楚地面</text><text x="1741" y="972.500">优先级1</text><text x="1743" y="1016.500">0.0%</text></g>
<path d="M1833 971h6l-3 4zM1833 1013l3-3.500 3 3.500zM1833 1019l3 3.500 3-3.500z" fill="#777"/>
<!-- status bar -->
<rect x="8" y="1045" width="1858" height="33" fill="#f5f5f5"/>
<path d="M8 1045.500H1866" stroke="#e0e0e0"/>
<path d="M178.500 1048v28" stroke="#e4e4e4"/>
<path d="M28 1056v13M48 1056v13" stroke="#444" stroke-width="1.800"/><rect x="32" y="1056.500" width="12" height="12" fill="none" stroke="#444" stroke-width="1.800"/>
<text x="74" y="1063" fill="#555">页-1</text><path d="M167 1061h6l-3 3.500z" fill="#888"/>
<text x="206" y="1063" fill="#222" font-weight="bold">页-1</text>
<path d="M265 1062h10M270 1057v10" stroke="#333" stroke-width="1.800"/>
<circle cx="1586.500" cy="1062" r="7.500" fill="none" stroke="#444" stroke-width="1.800"/><path d="M1584 1058l6 4-6 4z" fill="#444"/>
<path d="M1606 1062h10M1713 1062h9.500M1717.700 1057.500v9.500" stroke="#444" stroke-width="1.800"/>
<rect x="1623" y="1060" width="82" height="3.500" rx="1.700" fill="#dcdcdc"/><rect x="1623" y="1060" width="22" height="3.500" fill="#bbb"/>
<circle cx="1645" cy="1062" r="4.500" fill="#fff" stroke="#999" stroke-width="1.400"/>
<text x="1736" y="1063" fill="#444" style="font-size:12px">100%</text><path d="M1773 1062h5l-2.500 2.500z" fill="#999"/>
<path d="M1798.500 1059v-4h4M1808.500 1055h4v4M1812.500 1065v4h-4M1802.500 1069h-4v-4" fill="none" stroke="#444" stroke-width="1.800"/>
<rect x="1822.500" y="1055" width="14" height="14" fill="none" stroke="#444" stroke-width="1.500"/><path d="M1825 1062h9M1827 1060l-2 2 2 2M1832 1060l2 2-2 2" fill="none" stroke="#444"/>
</svg>
<div id="pal"><i style="background:#c00f20"></i><i style="background:#d3152a"></i><i style="background:#b8466e"></i><i style="background:#e05768"></i><i style="background:#ee6f7f"></i><i style="background:#e8609c"></i><i style="background:#e28db5"></i><i style="background:#ee8e8e"></i><i style="background:#ef8f96"></i><i style="background:#fba878"></i><i style="background:#f1b29e"></i><i style="background:#f8c4c4"></i><i style="background:#f3d6e5"></i><i style="background:#fbd5e3"></i><i style="background:#fde6ee"></i><i style="background:#0f2b5b"></i><i style="background:#1d3a73"></i><i style="background:#2f3d87"></i><i style="background:#0f4c93"></i><i style="background:#0e5fa8"></i><i style="background:#3f66b0"></i><i style="background:#5680c4"></i><i style="background:#0a7dcd"></i><i style="background:#0a8fdc"></i><i style="background:#2a9fd8"></i><i style="background:#0ab2f0"></i><i style="background:#35c5f5"></i><i style="background:#8ec3e8"></i><i style="background:#9dd1ee"></i><i style="background:#cde8f5"></i><i style="background:#004d38"></i><i style="background:#006241"></i><i style="background:#00695f"></i><i style="background:#5e6e35"></i><i style="background:#0d7a3e"></i><i style="background:#1f8b4c"></i><i style="background:#14a08c"></i><i style="background:#5abcbc"></i><i style="background:#1fc8b0"></i><i style="background:#4fbb86"></i><i style="background:#0ead5a"></i><i style="background:#8bb826"></i><i style="background:#a7cf60"></i><i style="background:#c1d840"></i><i style="background:#d4e6bd"></i><i style="background:#e34e1b"></i><i style="background:#f06a00"></i><i style="background:#f58a0a"></i><i style="background:#f39c4a"></i><i style="background:#f2ab1b"></i><i style="background:#fbb30d"></i><i style="background:#fac42e"></i><i style="background:#fbc93c"></i><i style="background:#fddb1e"></i><i style="background:#fee800"></i><i style="background:#fff27a"></i><i style="background:#fbd56e"></i><i style="background:#f5d88f"></i><i style="background:#fde0ac"></i><i style="background:#fdf0d8"></i><i style="background:#7a2e7c"></i><i style="background:#803a8c"></i><i style="background:#6d3e96"></i><i style="background:#6b4a9c"></i><i style="background:#7c5b9e"></i><i style="background:#a0609e"></i><i style="background:#cd7fb4"></i><i style="background:#ab99d0"></i><i style="background:#c1addb"></i><i style="background:#e6bfdc"></i><i style="background:#5b2e1c"></i><i style="background:#7a3f2a"></i><i style="background:#9a5228"></i><i style="background:#a5602e"></i><i style="background:#bb7a3f"></i><i style="background:#b98a60"></i><i style="background:#e0b888"></i><i style="background:#d0d0c8"></i><i style="background:#c9d6c9"></i><i style="background:#000"></i><i style="background:#333"></i><i style="background:#595959"></i><i style="background:#6e6e6e"></i><i style="background:#8c8c8c"></i><i style="background:#a0a0a0"></i><i style="background:#b0b0b0"></i><i style="background:#c0c0c0"></i><i style="background:#d0d0d0"></i><i style="background:#e0e0e0"></i><i style="background:#fff"></i></div>
<div id="wm">知乎用户</div>
</body></html>
